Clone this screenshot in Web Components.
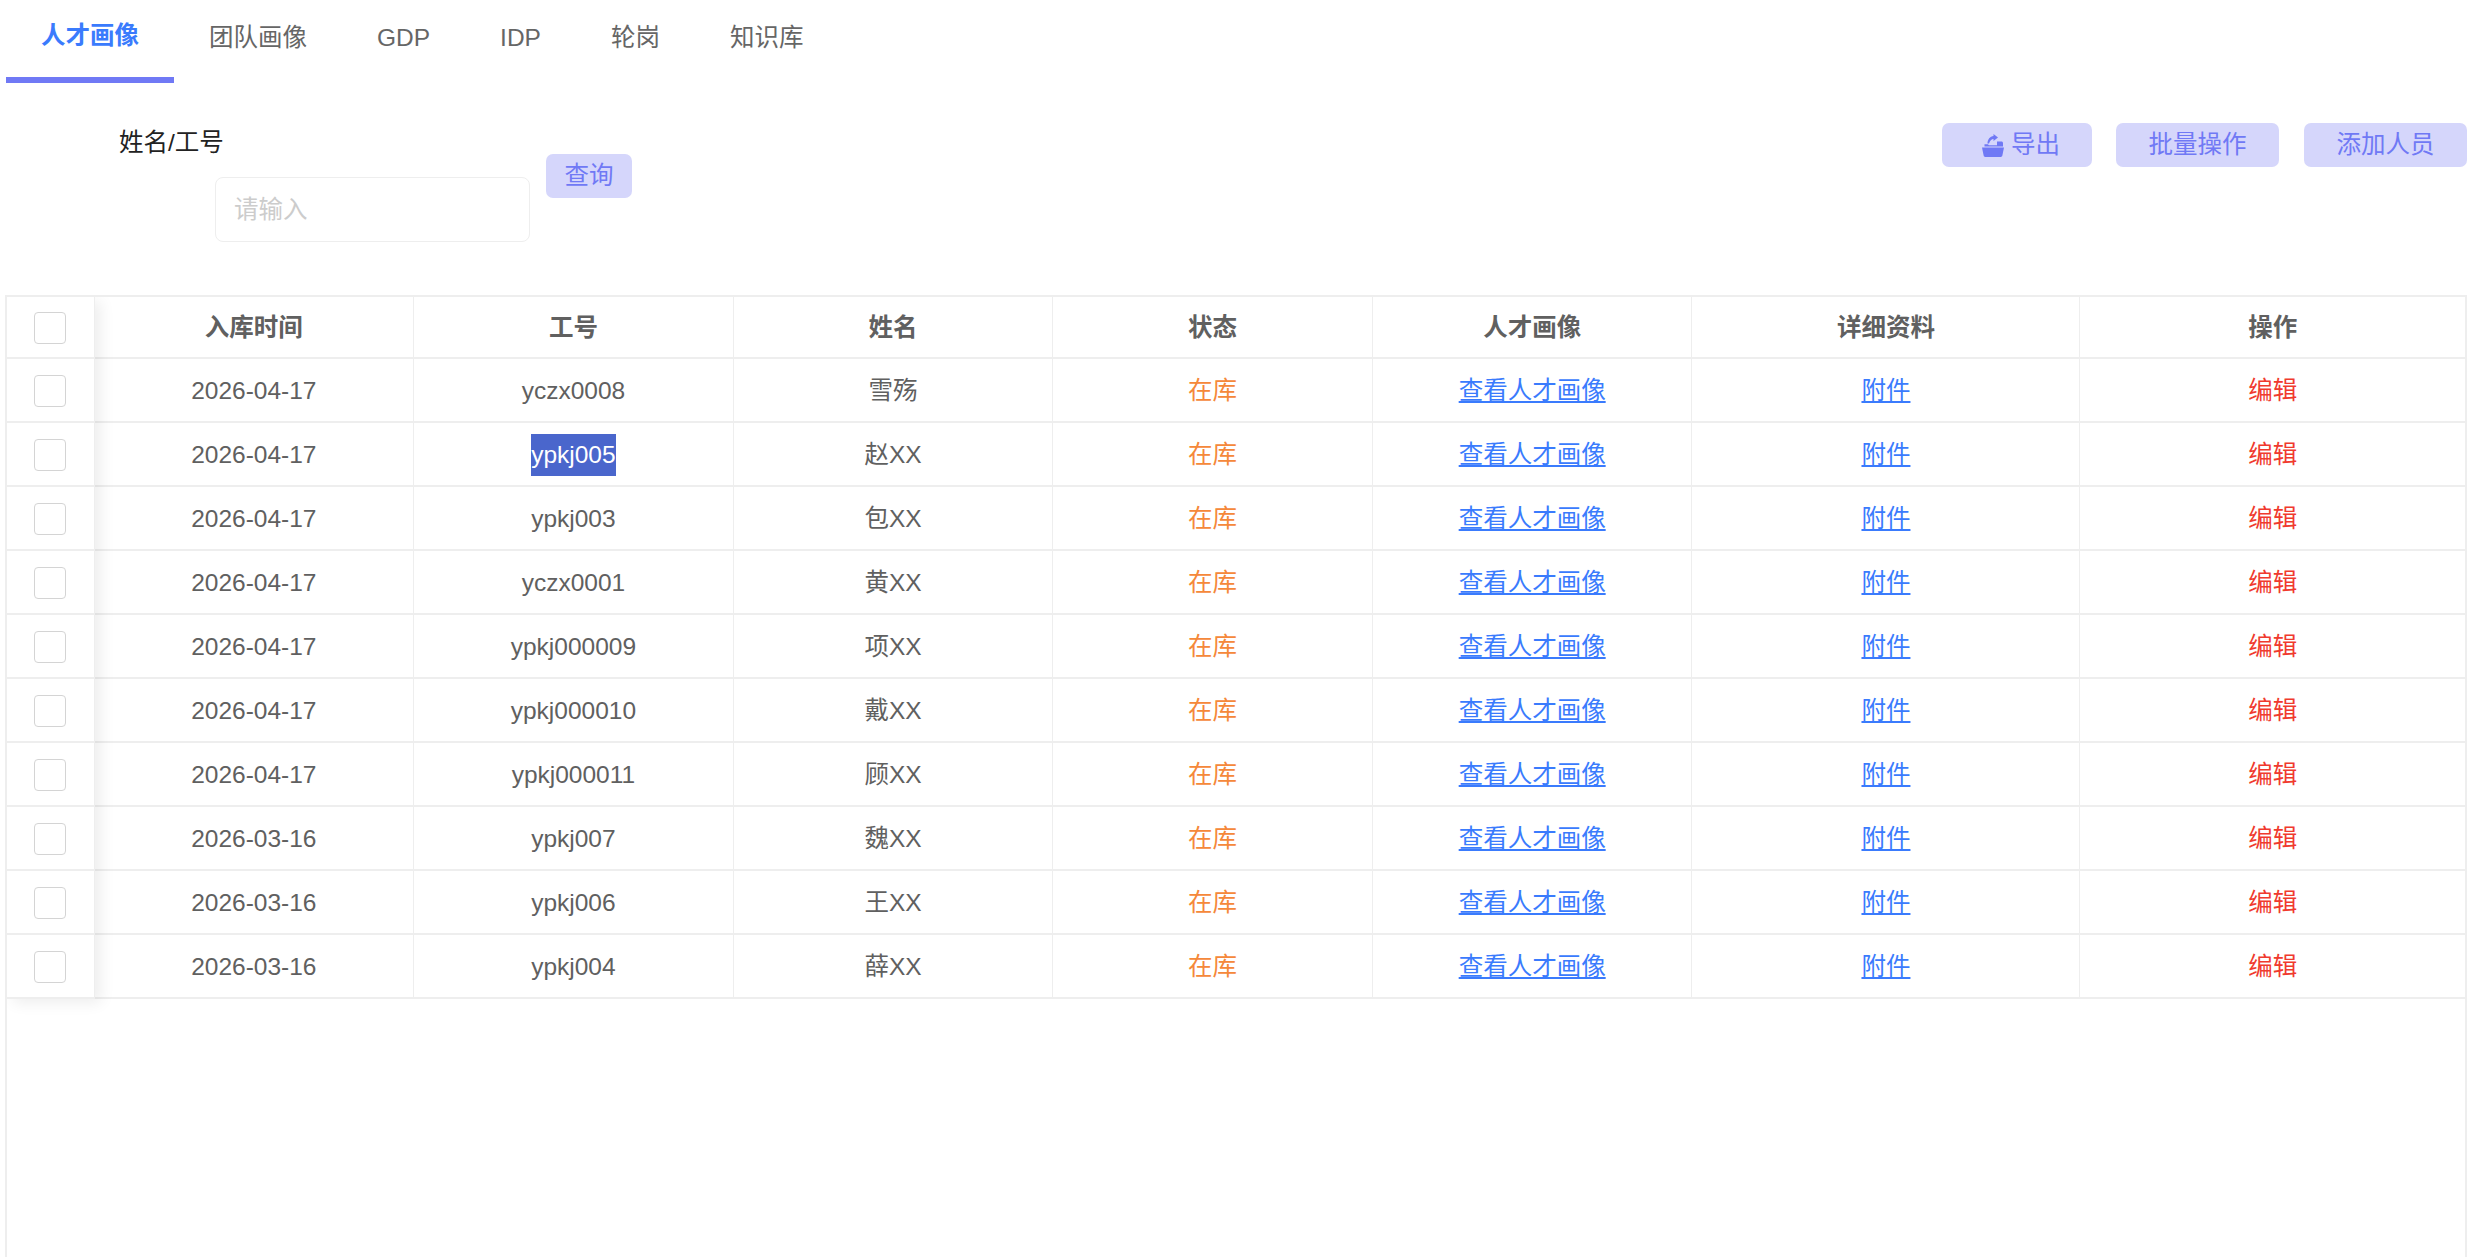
<!DOCTYPE html>
<html lang="zh">
<head>
<meta charset="utf-8">
<title>人才画像</title>
<style>
  html, body { margin: 0; height: 100%; background: #fff; }
  body {
    font-family: "Liberation Sans", "Noto Sans CJK SC", sans-serif;
    font-size: 24.5px;
    line-height: 30px;
    color: #606060;
    overflow: hidden;
  }
</style>
</head>
<body>
<talent-page></talent-page>

<script>
class TabBar extends HTMLElement {
  constructor() {
    super();
    this.attachShadow({ mode: 'open' });
  }

  connectedCallback() {
    const tabs = ['人才画像', '团队画像', 'GDP', 'IDP', '轮岗', '知识库'];
    this.shadowRoot.innerHTML = `
      <style>
        :host { display: flex; padding-left: 6px; height: 83px; box-sizing: border-box; }
        .tab {
          padding: 23px 35px 0;
          height: 83px;
          box-sizing: border-box;
          color: #666;
        }
        .active {
          color: #3a7bfd;
          font-weight: 700;
          padding-top: 21px;
          border-bottom: 6px solid #7079f5;
        }
      </style>
      ${tabs.map((t, i) => `<div class="tab ${i === 0 ? 'active' : ''}">${t}</div>`).join('')}
    `;
  }
}

class SoftButton extends HTMLElement {
  constructor() {
    super();
    this.attachShadow({ mode: 'open' });
    this.shadowRoot.innerHTML = `
      <style>
        :host {
          display: inline-flex;
          align-items: center;
          justify-content: center;
          height: 44px;
          padding: 0 32.5px;
          box-sizing: border-box;
          background: #d5d6fb;
          color: #7079f5;
          border-radius: 7px;
          white-space: nowrap;
          cursor: pointer;
        }
      </style>
      <slot></slot>
    `;
  }
}

class SearchForm extends HTMLElement {
  constructor() {
    super();
    this.attachShadow({ mode: 'open' });
    this.shadowRoot.innerHTML = `
      <style>
        :host { display: flex; align-items: flex-start; padding-left: 119px; }
        .field { display: flex; flex-direction: column; }
        label { color: #222; margin-top: 45px; }
        .input {
          margin: 19px 0 0 96px;
          width: 315px;
          height: 65px;
          box-sizing: border-box;
          border: 1.5px solid #eeeeee;
          border-radius: 8px;
          padding-left: 18px;
          display: flex;
          align-items: center;
          color: #cccccc;
        }
        soft-button { margin: 71px 0 0 16px; padding: 0 18.5px; }
      </style>
      <div class="field">
        <label>姓名/工号</label>
        <div class="input">请输入</div>
      </div>
      <soft-button>查询</soft-button>
    `;
  }
}

class ToolBar extends HTMLElement {
  constructor() {
    super();
    this.attachShadow({ mode: 'open' });
    this.shadowRoot.innerHTML = `
      <style>
        :host { display: flex; gap: 25px; padding: 40px 9px 0 0; align-items: flex-start; }
        soft-button.export { padding: 0 32px 0 40px; margin-right: -1px; }
        .inner { display: flex; align-items: center; }
        svg { width: 22px; height: 23px; margin-right: 7px; flex: none; }
      </style>
      <soft-button class="export">
        <span class="inner">
          <svg viewBox="0 0 22 23" fill="#7079f5">
            <path d="M11.5 0L16 3.5 11.5 7V5C9.5 5 8 6.5 7 9.5H5.5C5.5 5.5 8 2.3 11.5 2z"/>
            <path d="M2.5 12.6v-2.3h3.4l1 1H15V7.5h4.5c.8 0 1.5.7 1.5 1.5v3.6z"/>
            <path d="M0 13.6h22l-1.7 8.2c-.2.7-.7 1.2-1.5 1.2H3.2c-.8 0-1.3-.5-1.5-1.2z"/>
          </svg>导出
        </span>
      </soft-button>
      <soft-button>批量操作</soft-button>
      <soft-button>添加人员</soft-button>
    `;
  }
}

class DataRow extends HTMLElement {
  constructor() {
    super();
    this.attachShadow({ mode: 'open' });
  }

  set cells(values) {
    const head = this.hasAttribute('head');
    this.shadowRoot.innerHTML = `
      <style>
        :host {
          display: grid;
          grid-template-columns: 87.5px repeat(5, 319.6px) 388px 1fr;
          height: ${head ? 62 : 64}px;
          box-sizing: border-box;
          border-bottom: 2px solid #eeeeee;
        }
        .cell {
          display: flex;
          align-items: center;
          justify-content: center;
          border-right: 1px solid #eeeeee;
          box-sizing: border-box;
          padding-top: 1.5px;
          font-weight: ${head ? 700 : 400};
        }
        .cell:last-child { border-right: 0; }
        .box {
          width: 32px;
          height: 32px;
          box-sizing: border-box;
          border: 1.5px solid #d4d4d4;
          border-radius: 4px;
          background: #fff;
        }
        .sel { background: #4a66cc; color: #fff; line-height: 42px; height: 42px; }
        .status { color: #f5883a; }
        a {
          color: #3a7bfd;
          text-decoration: underline;
          text-decoration-thickness: 2px;
          text-underline-offset: 2px;
        }
        .edit { color: #f03a2e; }
      </style>
      <div class="cell"><div class="box"></div></div>
      ${values.map(v => `<div class="cell">${v}</div>`).join('')}
    `;
  }
}

class DataTable extends HTMLElement {
  constructor() {
    super();
    this.attachShadow({ mode: 'open' });
  }

  connectedCallback() {
    const rows = [
      ['2026-04-17', 'yczx0008', '雪殇'],
      ['2026-04-17', '<span class="sel">ypkj005</span>', '赵XX'],
      ['2026-04-17', 'ypkj003', '包XX'],
      ['2026-04-17', 'yczx0001', '黄XX'],
      ['2026-04-17', 'ypkj000009', '项XX'],
      ['2026-04-17', 'ypkj000010', '戴XX'],
      ['2026-04-17', 'ypkj000011', '顾XX'],
      ['2026-03-16', 'ypkj007', '魏XX'],
      ['2026-03-16', 'ypkj006', '王XX'],
      ['2026-03-16', 'ypkj004', '薛XX']
    ];
    this.shadowRoot.innerHTML = `
      <style>
        :host {
          display: block;
          position: relative;
          overflow: hidden;
          margin-left: 5px;
          width: 2462px;
          height: 962px;
          box-sizing: border-box;
          border: solid #eeeeee;
          border-width: 2px 2px 0 2px;
        }
        .fixed-shadow {
          position: absolute;
          left: 0;
          top: 0;
          width: 87.5px;
          height: 702px;
          box-shadow: 6px 4px 14px rgba(0, 0, 0, .07);
          pointer-events: none;
        }
      </style>
      <div id="rows"></div>
      <div class="fixed-shadow"></div>
    `;
    const holder = this.shadowRoot.querySelector('#rows');
    const head = document.createElement('data-row');
    head.setAttribute('head', '');
    head.cells = ['入库时间', '工号', '姓名', '状态', '人才画像', '详细资料', '操作'];
    holder.appendChild(head);
    rows.forEach(r => {
      const row = document.createElement('data-row');
      row.cells = [
        r[0], r[1], r[2],
        '<span class="status">在库</span>',
        '<a href="#">查看人才画像</a>',
        '<a href="#">附件</a>',
        '<span class="edit">编辑</span>'
      ];
      holder.appendChild(row);
    });
  }
}

class TalentPage extends HTMLElement {
  constructor() {
    super();
    this.attachShadow({ mode: 'open' });
    this.shadowRoot.innerHTML = `
      <style>
        :host { display: block; }
        .filters {
          display: flex;
          justify-content: space-between;
          align-items: flex-start;
          height: 212px;
        }
      </style>
      <tab-bar></tab-bar>
      <div class="filters">
        <search-form></search-form>
        <tool-bar></tool-bar>
      </div>
      <data-table></data-table>
    `;
  }
}

customElements.define('tab-bar', TabBar);
customElements.define('soft-button', SoftButton);
customElements.define('search-form', SearchForm);
customElements.define('tool-bar', ToolBar);
customElements.define('data-row', DataRow);
customElements.define('data-table', DataTable);
customElements.define('talent-page', TalentPage);
</script>
</body>
</html>
